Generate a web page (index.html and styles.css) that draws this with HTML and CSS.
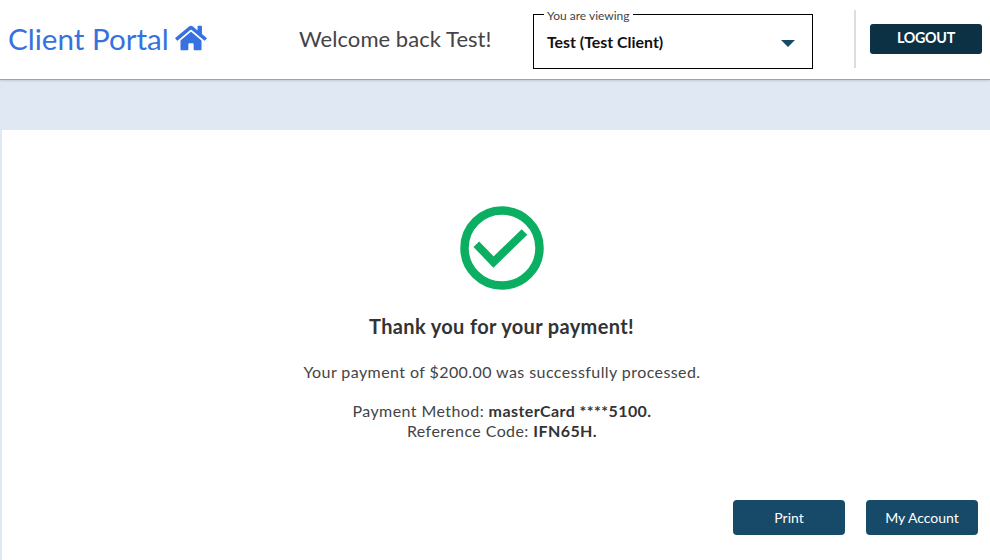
FILE: index.html
```html
<!DOCTYPE html>
<html lang="en">
<head>
    <meta charset="UTF-8">
    <meta name="viewport" content="width=device-width, initial-scale=1.0">
    <title>Client Portal</title>
    <link rel="stylesheet" href="styles.css">
</head>
<body>
    <header class="topbar">
        <div class="brand">
            <span class="brand-name">Client Portal</span>
            <svg class="brand-icon" viewBox="0 0 576 512" aria-hidden="true">
                <path d="M280.37 148.26L96 300.11V464a16 16 0 0 0 16 16l112.06-.29a16 16 0 0 0 15.92-16V368a16 16 0 0 1 16-16h64a16 16 0 0 1 16 16v95.64a16 16 0 0 0 16 16.05L464 480a16 16 0 0 0 16-16V300L295.67 148.26a12.19 12.19 0 0 0-15.3 0zM571.6 251.47L488 182.56V44.05a12 12 0 0 0-12-12h-56a12 12 0 0 0-12 12v72.61L318.47 43a48 48 0 0 0-61 0L4.34 251.47a12 12 0 0 0-1.6 16.9l25.5 31A12 12 0 0 0 45.15 301l235.22-193.74a12.19 12.19 0 0 1 15.3 0L530.9 301a12 12 0 0 0 16.9-1.6l25.5-31a12 12 0 0 0-1.7-16.93z"/>
            </svg>
        </div>
        <div class="welcome">Welcome back Test!</div>
        <fieldset class="viewing">
            <legend>You are viewing</legend>
            <span class="viewing-value">Test (Test Client)</span>
            <span class="caret"></span>
        </fieldset>
        <div class="divider"></div>
        <button class="logout">LOGOUT</button>
    </header>

    <main class="card">
        <svg class="check" viewBox="0 0 84 84" aria-hidden="true">
            <circle cx="42" cy="42" r="37.5" fill="none" stroke="#0cae62" stroke-width="8.5"/>
            <path d="M16.3 38.3 L33.5 56 L64.5 26" fill="none" stroke="#0cae62" stroke-width="8"/>
        </svg>
        <h1>Thank you for your payment!</h1>
        <p class="processed">Your payment of $200.00 was successfully processed.</p>
        <p class="details">
            Payment Method: <b>masterCard ****5100.</b><br>
            Reference Code: <b>IFN65H.</b>
        </p>
        <div class="actions">
            <button class="action print">Print</button>
            <button class="action">My Account</button>
        </div>
    </main>
</body>
</html>
```

FILE: styles.css
```css
* {
    box-sizing: border-box;
}
html, body {
    height: 100%;
}
body {
    margin: 0;
    font-family: Lato, 'Open Sans', sans-serif;
    background: #dfe8f3;
    overflow: hidden;
    display: flex;
    flex-direction: column;
}
.topbar {
    height: 80px;
    flex: none;
    display: flex;
    align-items: flex-start;
    background: #fff;
    border-bottom: 1px solid #a3a3a3;
    box-shadow: 0 1px 2px rgba(0,0,0,0.12);
}
.brand {
    width: 299px;
    padding: 20px 0 0 8px;
    display: flex;
    align-items: center;
    color: #3771e0;
}
.brand-name {
    font-size: 29.6px;
    line-height: 38px;
}
.brand-icon {
    width: 32px;
    height: 28px;
    margin: -2px 0 0 6px;
    fill: #3771e0;
}
.welcome {
    width: 234px;
    padding-top: 24px;
    font-size: 22px;
    line-height: 29px;
    letter-spacing: 0.05px;
    color: #444;
}
.viewing {
    width: 280px;
    height: 63px;
    margin: 6px 0 0;
    padding: 0 0 0 13px;
    border: 1px solid #000;
    display: flex;
    align-items: center;
    position: relative;
}
.viewing legend {
    padding: 2px 3px 0;
    margin-left: -3px;
    font-size: 12px;
    line-height: 15px;
    color: #444;
}
.viewing-value {
    font-size: 15.9px;
    font-weight: 700;
    color: #111;
    margin-top: -9px;
}
.caret {
    position: absolute;
    right: 17px;
    top: 17px;
    border-left: 7.5px solid transparent;
    border-right: 7.5px solid transparent;
    border-top: 7.5px solid #164a68;
}
.divider {
    width: 2px;
    height: 58px;
    margin: 10px 0 0 41px;
    background: #ddd;
}
.logout {
    width: 112px;
    height: 30px;
    margin: 24px 0 0 14px;
    border: 0;
    border-radius: 3px;
    background: #0c3044;
    color: #fff;
    font-family: inherit;
    font-size: 14.3px;
    font-weight: 700;
    letter-spacing: -0.3px;
    padding-bottom: 4px;
}
.card {
    flex: 1;
    margin: 50px 0 0 2px;
    background: #fff;
    display: flex;
    flex-direction: column;
    align-items: center;
    padding-top: 76px;
    padding-left: 12px;
    color: #444;
}
.check {
    width: 84px;
    height: 84px;
    flex: none;
}
h1 {
    margin: 23px 1px 0 0;
    font-size: 20px;
    line-height: 26px;
    font-weight: 700;
    letter-spacing: 0.35px;
    color: #333;
}
.processed {
    margin: 23px 0 0;
    font-size: 16px;
    line-height: 20px;
    letter-spacing: 0.42px;
}
.details {
    margin: 19px 0 0;
    font-size: 16px;
    line-height: 20px;
    letter-spacing: 0.42px;
    text-align: center;
}
.details b {
    color: #333;
}
.actions {
    align-self: flex-end;
    display: flex;
    gap: 21px;
    margin: 59px 12px 0 0;
}
.action {
    width: 112px;
    height: 35px;
    border: 0;
    border-radius: 4px;
    background: #164a68;
    color: #fff;
    font-family: inherit;
    font-size: 14px;
}
```
